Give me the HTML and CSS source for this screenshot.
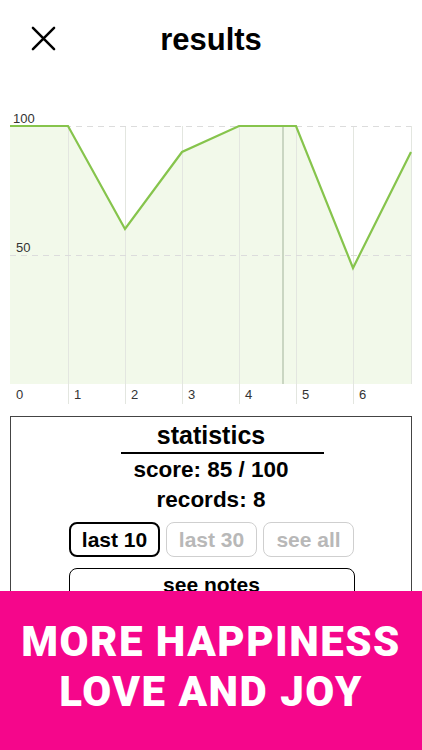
FILE: index.html
```html
<!DOCTYPE html>
<html>
<head>
<meta charset="utf-8">
<link rel="stylesheet" href="styles.css">
</head>
<body>
<div class="page">
  <header class="header">
    <svg class="close" width="26" height="26" viewBox="0 0 26 26"><path d="M2 2 L24 24 M24 2 L2 24" stroke="#000" stroke-width="2.6" stroke-linecap="round"/></svg>
    <h1 class="title">results</h1>
  </header>
  <svg class="chart" width="422" height="330" viewBox="0 0 422 330">
    <polygon points="10,46 68,46 125,149 182,72 239,46 296,46 353,188 411,72 411,304 10,304" fill="#f2f9ea"/>
    <g stroke="#e3e6e0" stroke-width="1">
      <line x1="68.5" y1="46" x2="68.5" y2="324"/>
      <line x1="125.5" y1="46" x2="125.5" y2="324"/>
      <line x1="182.5" y1="46" x2="182.5" y2="324"/>
      <line x1="239.5" y1="46" x2="239.5" y2="324"/>
      <line x1="296.5" y1="46" x2="296.5" y2="324"/>
      <line x1="353.5" y1="46" x2="353.5" y2="324"/>
      <line x1="411.5" y1="46" x2="411.5" y2="304"/>
    </g>
    <line x1="283" y1="46" x2="283" y2="304" stroke="#bccab4" stroke-width="1.5"/>
    <g stroke="#dcdcdc" stroke-width="1" stroke-dasharray="6 5">
      <line x1="10" y1="46.5" x2="411" y2="46.5"/>
      <line x1="10" y1="175.5" x2="411" y2="175.5"/>
    </g>
    <polyline points="10,46 68,46 125,149 182,72 239,46 296,46 353,188 411,72" fill="none" stroke="#86c44c" stroke-width="2.2" stroke-linejoin="miter"/>
    <g class="axis">
      <text x="13" y="43">100</text>
      <text x="16" y="172">50</text>
      <text x="16" y="319">0</text>
      <text x="74" y="319">1</text>
      <text x="131" y="319">2</text>
      <text x="188" y="319">3</text>
      <text x="245" y="319">4</text>
      <text x="302" y="319">5</text>
      <text x="359" y="319">6</text>
    </g>
  </svg>
  <section class="stats">
    <div class="stats-title">statistics</div>
    <div class="stats-rule"></div>
    <div class="stat-line first">score: 85 / 100</div>
    <div class="stat-line">records: 8</div>
    <div class="ranges">
      <div class="range active">last 10</div>
      <div class="range">last 30</div>
      <div class="range">see all</div>
    </div>
    <div class="notes">see notes</div>
  </section>
  <div class="banner">
    <div class="banner-text">MORE HAPPINESS<br>LOVE AND JOY</div>
  </div>
</div>
</body>
</html>
```

FILE: styles.css
```css
html, body {
  margin: 0;
  padding: 0;
  background: #fff;
}
body {
  font-family: "Liberation Sans", Arial, sans-serif;
  color: #000;
  width: 422px;
  height: 750px;
  overflow: hidden;
}
.page {
  position: relative;
  width: 422px;
  height: 750px;
  overflow: hidden;
}
.header {
  height: 80px;
  display: flex;
  align-items: center;
  justify-content: center;
  position: relative;
}
.close {
  position: absolute;
  left: 31px;
  top: 26px;
  width: 25px;
  height: 25px;
}
.title {
  margin: 0;
  font-size: 31px;
  font-weight: bold;
  margin-top: -1px;
}
.chart {
  display: block;
}
.axis text {
  font-family: "Liberation Sans", Arial, sans-serif;
  font-size: 13px;
  fill: #333;
}
.stats {
  margin: 6px 10px 0;
  height: 400px;
  border: 1.5px solid #444;
  border-bottom: none;
  display: flex;
  flex-direction: column;
  align-items: center;
}
.stats-title {
  margin-top: 4px;
  text-align: center;
  font-size: 25px;
  font-weight: bold;
  line-height: 28px;
}
.stats-rule {
  width: 203px;
  height: 2px;
  background: #000;
  margin-top: 3px;
  margin-left: 22px;
}
.stat-line {
  font-size: 22.5px;
  font-weight: bold;
  line-height: 30px;
}
.stat-line.first {
  margin-top: 1px;
}
.ranges {
  display: flex;
  gap: 6px;
  margin-top: 7px;
  margin-left: 1px;
}
.range {
  box-sizing: border-box;
  width: 91px;
  height: 35px;
  border: 1.5px solid #cfcfcf;
  border-radius: 8px;
  color: #b8b8b8;
  font-size: 21px;
  font-weight: bold;
  display: flex;
  align-items: center;
  justify-content: center;
}
.range.active {
  border: 2.5px solid #000;
  color: #000;
}
.notes {
  box-sizing: border-box;
  margin-top: 11px;
  margin-left: 1px;
  width: 286px;
  height: 42px;
  border: 1.5px solid #000;
  border-radius: 8px;
  font-size: 21px;
  font-weight: bold;
  text-align: center;
  line-height: 32px;
}
.banner {
  position: absolute;
  left: 0;
  top: 591px;
  width: 422px;
  height: 159px;
  background: #f5068b;
  display: flex;
  justify-content: center;
}
.banner-text {
  margin-top: 26px;
  color: #fff;
  font-family: Roboto, "Liberation Sans", sans-serif;
  font-weight: 900;
  font-size: 42px;
  line-height: 50px;
  text-align: center;
  letter-spacing: 1.5px;
}
```
